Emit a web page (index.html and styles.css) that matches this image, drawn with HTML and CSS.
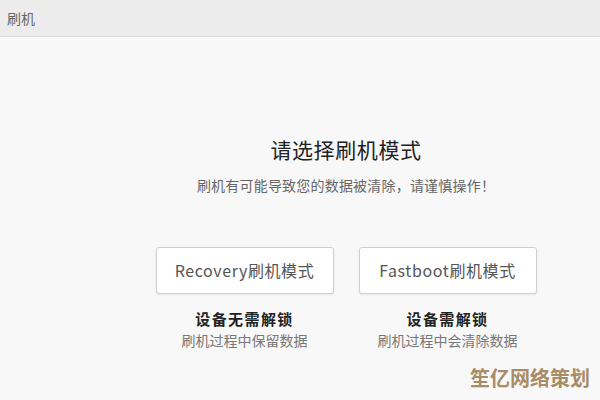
FILE: index.html
```html
<!DOCTYPE html>
<html lang="zh">
<head>
<meta charset="utf-8">
<link rel="stylesheet" href="styles.css">
</head>
<body>
<div class="app">
  <div class="titlebar">刷机</div>
  <div class="content">
    <h1 class="heading">请选择刷机模式</h1>
    <p class="warning">刷机有可能导致您的数据被清除，请谨慎操作！</p>
    <div class="modes">
      <div class="mode">
        <div class="btn">Recovery刷机模式</div>
        <div class="mode-title">设备无需解锁</div>
        <div class="mode-desc">刷机过程中保留数据</div>
      </div>
      <div class="mode">
        <div class="btn">Fastboot刷机模式</div>
        <div class="mode-title">设备需解锁</div>
        <div class="mode-desc">刷机过程中会清除数据</div>
      </div>
    </div>
  </div>
  <div class="watermark">笙亿网络策划</div>
</div>
</body>
</html>
```

FILE: styles.css
```css
html, body {
  margin: 0;
  padding: 0;
}
body {
  width: 600px;
  height: 400px;
  overflow: hidden;
  font-family: "Noto Sans CJK SC", "Liberation Sans", sans-serif;
  background: #f8f8f8;
}
.app {
  position: relative;
  width: 600px;
  height: 400px;
  display: flex;
  flex-direction: column;
}
.titlebar {
  height: 37px;
  box-sizing: border-box;
  background: #ececec;
  border-bottom: 1px solid #dadada;
  font-size: 14px;
  line-height: 36px;
  color: #666;
  padding-left: 7px;
}
.content {
  display: flex;
  flex-direction: column;
  align-items: center;
  padding-left: 92px;
}
.heading {
  margin: 97px 0 0;
  font-size: 21px;
  font-weight: normal;
  line-height: 30px;
  letter-spacing: 0.6px;
  color: #222;
}
.warning {
  margin: 11px 0 0;
  font-size: 14px;
  line-height: 20px;
  letter-spacing: 0.2px;
  color: #666;
}
.modes {
  display: flex;
  gap: 25px;
  margin-top: 52px;
}
.mode {
  display: flex;
  flex-direction: column;
  align-items: center;
  width: 178px;
}
.btn {
  box-sizing: border-box;
  width: 178px;
  height: 47px;
  border: 1px solid #cfcfcf;
  border-radius: 3px;
  background: #fff;
  box-shadow: 0 1px 2px rgba(0,0,0,0.08);
  font-size: 16px;
  line-height: 45px;
  letter-spacing: 0.6px;
  text-align: center;
  color: #555;
}
.mode-title {
  margin-top: 15px;
  font-size: 15px;
  line-height: 20px;
  letter-spacing: 1.4px;
  font-weight: bold;
  color: #222;
}
.mode-desc {
  margin-top: 1px;
  font-size: 14px;
  line-height: 20px;
  color: #777;
}
.watermark {
  position: absolute;
  right: 10px;
  bottom: 8px;
  font-size: 20px;
  font-weight: bold;
  color: #a88b67;
}
```
